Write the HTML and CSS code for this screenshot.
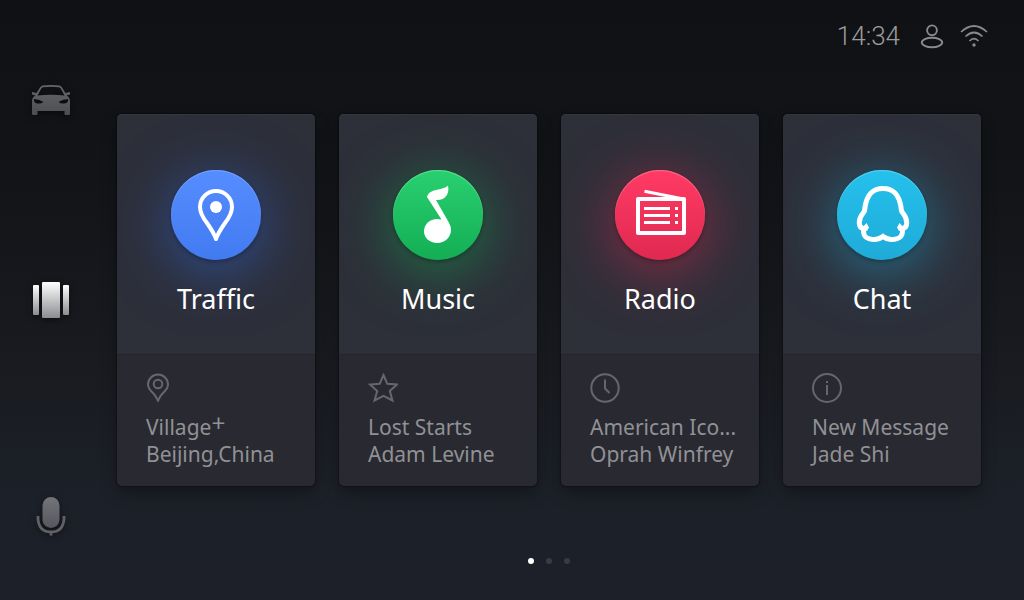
FILE: index.html
```html
<!DOCTYPE html>
<html lang="en">
<head>
<meta charset="utf-8">
<meta name="viewport" content="width=device-width, initial-scale=1">
<title>Car Dashboard</title>
<link rel="stylesheet" href="styles.css">
</head>
<body>
<div class="screen">
  <nav class="sidebar" aria-label="Main">
    <button class="nav-button nav-top" type="button" aria-label="Car">
      <svg width="40" height="32" viewBox="0 0 40 32">
        <defs><linearGradient id="dim" x1="0" y1="0" x2="0" y2="1"><stop offset="0" stop-color="#66676a"/><stop offset="1" stop-color="#4b4d50"/></linearGradient></defs>
        <path fill="url(#dim)" fill-rule="evenodd" d="M11.500 1.500Q20 .3 28.500 1.500Q30 2 31 3.500L34.500 9L39 8V10.500L35.500 11.500Q39 13 39 17.500V30Q39 31 38 31H34.500Q33.500 31 33.500 30V27H6.500V30Q6.500 31 5.500 31H2Q1 31 1 30V17.500Q1 13 4.500 11.500L1 10.500V8L5.500 9L9 3.500Q10 2 11.500 1.500ZM12 3.200Q10.800 3.700 10.300 4.500L6.500 11.500Q20 9.800 33.500 11.500L29.700 4.500Q29.200 3.700 28 3.200Q20 2.200 12 3.200ZM3 15Q2.500 19 6.500 19.500Q10 20 12.500 18Q9 15.500 3 15ZM37 15Q31 15.500 27.500 18Q30 20 33.500 19.500Q37.500 19 37 15Z"/>
      </svg>
    </button>
    <button class="nav-button" type="button" aria-label="Apps" aria-current="page">
      <svg width="36" height="36" viewBox="0 0 36 36">
        <defs><linearGradient id="bright" x1="0" y1="0" x2="0" y2="1"><stop offset="0" stop-color="#fff"/><stop offset="1" stop-color="#8b8c8e"/></linearGradient></defs>
        <rect x="0" y="3" width="6" height="30" rx="1" fill="url(#bright)"/>
        <rect x="9" y="0" width="18" height="36" rx="1" fill="url(#bright)"/>
        <rect x="30" y="3" width="6" height="30" rx="1" fill="url(#bright)"/>
      </svg>
    </button>
    <button class="nav-button nav-bottom" type="button" aria-label="Voice">
      <svg width="30" height="40" viewBox="0 0 30 40">
        <defs><linearGradient id="mic" x1="0" y1="0" x2="0" y2="1"><stop offset="0" stop-color="#737579"/><stop offset="1" stop-color="#55575c"/></linearGradient></defs>
        <rect x="6.500" y="1" width="17" height="31" rx="8.500" fill="url(#mic)"/>
        <path fill="none" stroke="#606267" stroke-width="2.800" d="M2 20V23Q3 36 15 36Q27 36 28 23V20M15 36V39.500"/>
      </svg>
    </button>
  </nav>

  <div class="content">
    <header class="status">
      <time class="clock">14:34</time>
      <div class="status-icons">
        <svg width="24" height="26" viewBox="0 0 24 26" fill="none" stroke="#8a8a8b" stroke-width="1.900" role="img" aria-label="User">
          <circle cx="12" cy="7.300" r="4.900"/><ellipse cx="12" cy="19.500" rx="10.200" ry="4.800"/>
        </svg>
        <svg width="28" height="24" viewBox="0 0 28 24" fill="none" stroke="#8a8a8b" stroke-width="1.700" role="img" aria-label="Wi-Fi">
          <path d="M1 8Q14-4 27 8M5.500 12.500Q14 4.500 22.500 12.500M9.500 17Q14 12.500 18.500 17"/><circle cx="14" cy="21" r="1.700" fill="#8a8a8b" stroke="none"/>
        </svg>
      </div>
    </header>

    <main class="cards">
      <a class="card" href="#traffic">
        <div class="card-top">
          <span class="badge badge-blue">
            <svg width="90" height="90" viewBox="0 0 90 90"><path fill="none" stroke="#fff" stroke-width="4" stroke-linejoin="round" d="M45 69Q43 63 36 53Q29 44 29 37A16 16 0 0 1 61 37Q61 44 54 53Q47 63 45 69Z"/><circle cx="45" cy="37" r="6" fill="#fff"/></svg>
          </span>
          <h2 class="title">Traffic</h2>
        </div>
        <div class="card-info">
          <svg class="info-icon" width="30" height="30" viewBox="0 0 30 30"><path d="M12 28.500Q11 24 6 19Q2 15 2 11.500A10 10 0 0 1 22 11.500Q22 15 18 19Q13 24 12 28.500Z"/><circle cx="12" cy="11" r="4.300"/></svg>
          <p class="line">Village<sup class="plus">+</sup></p>
          <p class="line">Beijing,China</p>
        </div>
      </a>
      <a class="card" href="#music">
        <div class="card-top">
          <span class="badge badge-green">
            <svg width="90" height="90" viewBox="0 0 90 90"><path fill="#fff" d="M55 15.500C50 21 36 18 34 27L48.500 49.500C39 47 31 53 31 61.500C31 68 37 73 44 73C52 73 58 67 58 60C58 57 57 54.500 55 51L43 30C51 31 57 25 55 15.500Z"/></svg>
          </span>
          <h2 class="title">Music</h2>
        </div>
        <div class="card-info">
          <svg class="info-icon" width="30" height="30" viewBox="0 0 30 30"><path d="M15.500 2L19.300 10.800L29 11.500L21.800 18L24.500 27.500L15.500 22.800L6.500 27.500L9.200 18L2 11.500L11.700 10.800Z"/></svg>
          <p class="line">Lost Starts</p>
          <p class="line">Adam Levine</p>
        </div>
      </a>
      <a class="card" href="#radio">
        <div class="card-top">
          <span class="badge badge-red">
            <svg width="90" height="90" viewBox="0 0 90 90"><g fill="none" stroke="#fff"><rect x="23" y="29" width="46" height="34" stroke-width="4" stroke-linejoin="round"/><path stroke-width="3" d="M29.500 21.200L66 28.500M29 38.500H55M29 45.500H55M29 52.500H55M60 38.500H63M60 45.500H63M60 52.500H63"/></g></svg>
          </span>
          <h2 class="title">Radio</h2>
        </div>
        <div class="card-info">
          <svg class="info-icon" width="30" height="30" viewBox="0 0 30 30"><circle cx="15" cy="15" r="13.700"/><path d="M15 6.500V15.500L19.500 20"/></svg>
          <p class="line">American Ico...</p>
          <p class="line">Oprah Winfrey</p>
        </div>
      </a>
      <a class="card" href="#chat">
        <div class="card-top">
          <span class="badge badge-cyan">
            <svg width="90" height="90" viewBox="0 0 90 90"><g fill="none" stroke="#fff" stroke-width="5"><path d="M27 58.500C20.500 58 21 49 26.500 42.500Q28 41 28 37C30 25 35 18.500 46 18.500C57 18.500 62 25 64 37Q64 41 65.500 42.500C71 49 71.500 58 65 58.500"/><path d="M27 57C25 66 29 69.500 38 69.500Q43 69 46 66.500Q49 69 54 69.500C63 69.500 67 66 65 57"/></g><path fill="#fff" d="M25 58L29.500 53L32 57.500L30 61L26 60ZM67 58L62.500 53L60 57.500L62 61L66 60Z"/></svg>
          </span>
          <h2 class="title">Chat</h2>
        </div>
        <div class="card-info">
          <svg class="info-icon" width="30" height="30" viewBox="0 0 30 30"><circle cx="15" cy="15" r="14"/><path d="M15 12V22M15 8V10"/></svg>
          <p class="line">New Message</p>
          <p class="line">Jade Shi</p>
        </div>
      </a>
    </main>

    <div class="pager">
      <button class="dot dot-active" type="button" aria-label="Page 1"></button>
      <button class="dot" type="button" aria-label="Page 2"></button>
      <button class="dot" type="button" aria-label="Page 3"></button>
    </div>
  </div>
</div>
</body>
</html>
```
FILE: styles.css
```css
* { box-sizing: border-box; }

body {
  margin: 0;
  background: #101114;
  font-family: "Noto Sans", "Open Sans", sans-serif;
}

.screen {
  display: flex;
  min-height: 100vh;
  background: linear-gradient(#101114 0%, #131418 30%, #191b20 62%, #1c2028 82%, #1d2029 100%);
}

.sidebar {
  display: grid;
  flex: 0 0 102px;
  grid-template-rows: 1fr auto 1fr;
  justify-items: center;
  padding: 64px 0;
}

.nav-button {
  display: block;
  padding: 0;
  border: 0;
  background: none;
  cursor: pointer;
}

.nav-top {
  align-self: start;
  padding-top: 20px;
}

.nav-bottom { align-self: end; }

.nav-button svg {
  display: block;
  filter: drop-shadow(0 2px 3px rgba(0, 0, 0, 0.5));
}

.content {
  display: flex;
  flex: 1;
  flex-direction: column;
  min-width: 0;
}

.status {
  display: flex;
  justify-content: flex-end;
  align-items: center;
  gap: 20px;
  padding: 20px 36px 0 0;
}

.status-icons {
  display: flex;
  align-items: center;
  gap: 16px;
}

.clock {
  color: #9b9b9c;
  font-family: Roboto, sans-serif;
  font-weight: 300;
  font-size: 26px;
  line-height: 32px;
}

.cards {
  display: grid;
  grid-template-columns: repeat(4, minmax(0, 1fr));
  gap: 24px;
  padding: 62px 43px 0 15px;
}

.card {
  display: block;
  border-radius: 5px;
  background: #292932;
  box-shadow: 0 0 1px 1px rgba(0, 0, 0, 0.25), 0 8px 16px rgba(0, 0, 0, 0.3);
  text-decoration: none;
}

.card-top {
  display: flex;
  flex-direction: column;
  align-items: center;
  gap: 21px;
  overflow: hidden;
  padding: 56px 0 37px;
  border-radius: 5px 5px 0 0;
  background: #2d2f39;
  box-shadow: inset 0 1px #343640;
}

.badge {
  width: 90px;
  height: 90px;
  border-radius: 50%;
}

.badge svg { display: block; }

.badge-blue {
  background: linear-gradient(#568dff, #427af0);
  box-shadow: inset 0 1px 1px #72a0ff, 0 2px 4px rgba(0, 0, 0, 0.3), 0 10px 60px rgba(48, 105, 225, 0.6);
}

.badge-green {
  background: linear-gradient(#28d070, #14ae54);
  box-shadow: inset 0 1px 1px #61df96, 0 2px 4px rgba(0, 0, 0, 0.3), 0 10px 60px rgba(20, 174, 84, 0.6);
}

.badge-red {
  background: linear-gradient(#ff3b65, #e02950);
  box-shadow: inset 0 1px 1px #ff6d8d, 0 2px 4px rgba(0, 0, 0, 0.3), 0 10px 60px rgba(224, 41, 80, 0.6);
}

.badge-cyan {
  background: linear-gradient(#25c0ec, #1fabd8);
  box-shadow: inset 0 1px 1px #5ad1f2, 0 2px 4px rgba(0, 0, 0, 0.3), 0 10px 60px rgba(31, 171, 216, 0.6);
}

.title {
  margin: 0;
  color: #fff;
  font-weight: 400;
  font-size: 27px;
  line-height: 36px;
}

.card-info {
  padding: 18px 16px 18px 29px;
  border-top: 1px solid #25252d;
}

.info-icon {
  display: block;
  margin-bottom: 11px;
  fill: none;
  stroke: #66666d;
  stroke-width: 2;
}

.line {
  margin: 0;
  color: #919194;
  font-size: 21px;
  line-height: 27px;
  white-space: nowrap;
}

.plus {
  font-family: Lato, sans-serif;
  font-weight: 400;
  font-size: 24px;
  line-height: 0;
  vertical-align: 4px;
}

.pager {
  display: flex;
  justify-content: center;
  gap: 12px;
  padding: 72px 43px 36px 15px;
}

.dot {
  width: 6px;
  height: 6px;
  padding: 0;
  border: 0;
  border-radius: 50%;
  background: #383b44;
  cursor: pointer;
}

.dot-active { background: #fff; }
```
